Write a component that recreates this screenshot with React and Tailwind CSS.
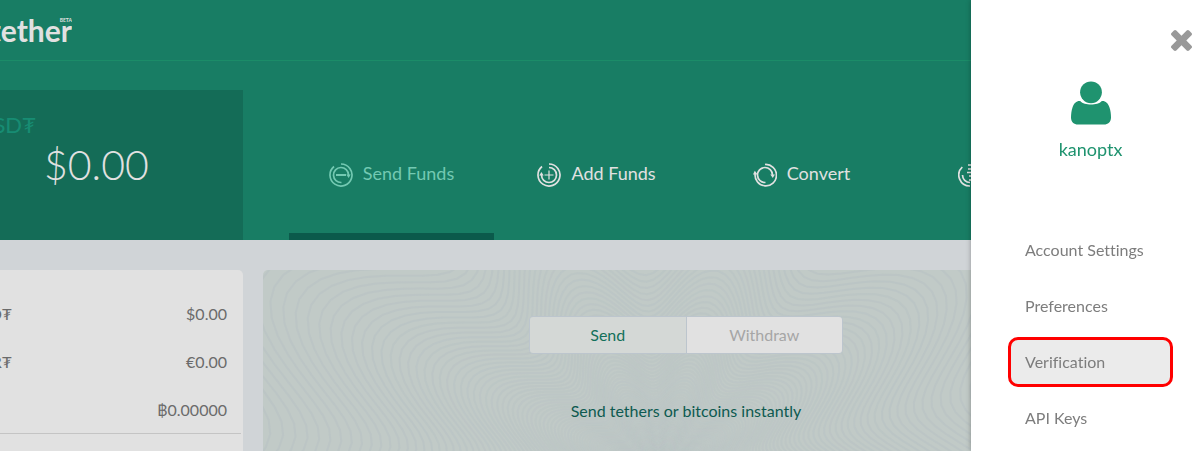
import React from "react";

const WAVE_CENTER = { x: 397, y: 205 };

function buildWaves() {
  const paths = [];
  for (let r = 620; r > 16; r *= 0.967) {
    let d = "";
    for (let deg = 0; deg < 360; deg += 2) {
      const t = (deg * Math.PI) / 180;
      const k = r * (1 + 0.145 * Math.cos(9 * t - (9 * 34 * Math.PI) / 180));
      const x = (WAVE_CENTER.x + k * Math.cos(t)).toFixed(1);
      const y = (WAVE_CENTER.y - k * Math.sin(t)).toFixed(1);
      d += (deg === 0 ? "M" : "L") + x + " " + y;
    }
    paths.push({ d: d + "Z", opacity: Math.min(0.7, 0.3 + r / 700) });
  }
  return paths;
}

const waves = buildWaves();

function Waves() {
  return (
    <svg className="absolute inset-0 h-full w-full" fill="none" stroke="#b9c3c4" strokeWidth="2" aria-hidden="true">
      {waves.map((wave, i) => (
        <path key={i} d={wave.d} opacity={wave.opacity} />
      ))}
    </svg>
  );
}

function TabIcon({ kind }) {
  return (
    <svg viewBox="0 0 24 24" className="size-6 shrink-0" fill="none" stroke="currentColor" strokeWidth="1.7" aria-hidden="true">
      {kind === "send" && (
        <>
          <path d="M12 1A11 11 0 1 1 5 3.5" />
          <path d="M12.5 19.5A7.5 7.5 0 1 1 19.5 12" />
          <path d="M17.3 11.5h4.4L19.6 15z" fill="currentColor" stroke="none" />
          <path d="M7 12h10" strokeWidth="2" />
        </>
      )}
      {kind === "add" && (
        <>
          <path d="M12 1A11 11 0 1 1 5 3.5" />
          <path d="M12 4.5A7.5 7.5 0 1 1 4.5 12" />
          <path d="M2.3 12.5h4.4L4.4 9z" fill="currentColor" stroke="none" />
          <path d="M7.5 12h9M12 7.5v9" strokeWidth="1.2" />
        </>
      )}
      {kind === "convert" && (
        <>
          <path d="M12 1.5A10.7 10.7 0 1 1 2.2 10.5" />
          <path d="M12.5 19.5A7.5 7.5 0 1 1 19.5 12" />
          <path d="M0 11.5h4.6L1.8 7.8z" fill="currentColor" stroke="none" />
          <path d="M17.3 11.5h4.6L19.8 15z" fill="currentColor" stroke="none" />
        </>
      )}
      {kind === "list" && (
        <>
          <path d="M12 23A11 11 0 0 1 4.3 4" />
          <path d="M12 19.5A7.5 7.5 0 0 1 4.5 12" />
          <path d="M10 2h8M10 6h8M9 9.500h9M11 13h7M11 17h7" />
        </>
      )}
    </svg>
  );
}

const tabs = [
  { kind: "send", label: "Send Funds", active: true },
  { kind: "add", label: "Add Funds" },
  { kind: "convert", label: "Convert" },
  { kind: "list" },
];

const balances = [
  { unit: "USD₮", amount: "$0.00" },
  { unit: "EUR₮", amount: "€0.00" },
  { unit: "", amount: "฿0.00000" },
];

const menu = ["Account Settings", "Preferences", "Verification", "API Keys"];

function Header() {
  return (
    <header className="flex h-[61px] items-center border-b border-[#1b8c68]">
      <a href="#home" className="relative flex h-[60px] w-18 items-center justify-end overflow-hidden text-[30px] font-bold text-[#e1e1e1]">
        tether
        <span className="absolute top-[18px] right-0 text-[5px] leading-none font-bold">BETA</span>
      </a>
    </header>
  );
}

function Tabs() {
  return (
    <nav className="mt-[29px] ml-[46px] grid flex-1 grid-cols-4">
      {tabs.map((tab) => (
        <button
          key={tab.kind}
          type="button"
          className={
            "flex items-center gap-2.5 border-b-7 pt-[26px] text-lg " +
            (tab.active ? "border-[#0b5a4b] text-[#73c9b2] " : "border-transparent text-[#e1e1e1] ") +
            (tab.label ? "justify-center" : "pl-[54px]")
          }
        >
          <TabIcon kind={tab.kind} />
          {tab.label && <span className="pb-1">{tab.label}</span>}
        </button>
      ))}
    </nav>
  );
}

function Drawer() {
  return (
    <aside className="fixed inset-y-0 right-0 w-[229px] overflow-hidden bg-white shadow-[0_0_5px_rgba(0,0,0,0.3)]">
      <div className="flex justify-end pt-[30px] pr-2">
        <button type="button" aria-label="Close" className="text-[#999999]">
          <svg viewBox="110 366 1188 1188" className="size-[21px]" fill="currentColor">
            <path d="M1298 1322q0 40-28 68l-136 136q-28 28-68 28t-68-28l-294-294-294 294q-28 28-68 28t-68-28l-136-136q-28-28-28-68t28-68l294-294-294-294q-28-28-28-68t28-68l136-136q28-28 68-28t68 28l294 294 294-294q28-28 68-28t68 28l136 136q28 28 28 68t-28 68l-294 294 294 294q28 28 28 68z" />
          </svg>
        </button>
      </div>
      <div className="mt-[30px] flex flex-col items-center pl-2.5 text-[#1f936f]">
        <svg viewBox="0 0 40 44" className="h-11 w-10" fill="currentColor" aria-hidden="true">
          <circle cx="20" cy="11.3" r="10.9" />
          <path d="M9.5 20.2C13 24.5 27 24.5 30.5 20.2C34 19.6 37 22 38.5 26.500C39.500 29.500 40 33 40 36.500C40 41 37 43.500 33 43.500H7C3 43.500 0 41 0 36.500C0 33 .5 29.500 1.500 26.500C3 22 6 19.600 9.500 20.200Z" />
        </svg>
        <p className="mt-2.5 text-lg leading-7">kanoptx</p>
      </div>
      <ul className="mt-[59px] text-[#7d7d7d]">
        {menu.map((item) => (
          <li key={item} className="flex h-14 items-center pl-[37px]">
            <a
              href="#menu"
              className={
                "flex h-[50px] w-[165px] items-center rounded-[10px] border-3 pl-3.5 " +
                (item === "Verification" ? "border-[#ff0000] bg-[#ebebeb]" : "border-transparent")
              }
            >
              {item}
            </a>
          </li>
        ))}
      </ul>
    </aside>
  );
}

export default function App() {
  return (
    <div className="flex h-screen flex-col overflow-hidden bg-[#d0d4d7] font-['Lato',sans-serif] text-base [font-variant-ligatures:none]">
      <div className="shrink-0 bg-[#187d64]">
        <Header />
        <div className="flex h-[179px] pr-[91px]">
          <section className="mt-[29px] w-[243px] bg-[#146c57] pt-[19px]">
            <h2 className="flex w-9 justify-end overflow-hidden text-[22px] leading-8 text-[#178c73]">USD₮</h2>
            <p className="pl-11 text-[41px] leading-12 font-light text-[#e1e1e1]">$0.00</p>
          </section>
          <Tabs />
        </div>
      </div>

      <main className="flex min-h-0 flex-1 gap-5 pt-[30px] pr-[91px]">
        <section className="w-[243px] rounded-tr-[5px] bg-[#e1e1e1] pt-5 text-[#6b6b6b]">
          <dl className="mr-0.5 h-36 border-b border-[#c4c4c4]">
            {balances.map((row) => (
              <div key={row.amount} className="flex h-12 items-center justify-between pr-3.5">
                <dt className="flex w-3 justify-end overflow-hidden">{row.unit}</dt>
                <dd>{row.amount}</dd>
              </div>
            ))}
          </dl>
        </section>

        <section className="relative flex-1 overflow-hidden rounded-t-[5px] bg-[#c1cac7]">
          <Waves />
          <div className="relative flex flex-col items-center pt-[46px]">
            <div className="flex h-[38px] w-[314px] overflow-hidden rounded-sm border border-[#bcc5cd] text-base">
              <button type="button" className="flex-1 border-r border-[#bcc5cd] bg-[#d4d8d6] text-[#12705a]">
                Send
              </button>
              <button type="button" className="flex-1 bg-[#e1e1e1] text-[#a6a6a6]">
                Withdraw
              </button>
            </div>
            <p className="mt-[45px] text-[#0d5a50]">Send tethers or bitcoins instantly</p>
          </div>
        </section>
      </main>
      <Drawer />
    </div>
  );
}
